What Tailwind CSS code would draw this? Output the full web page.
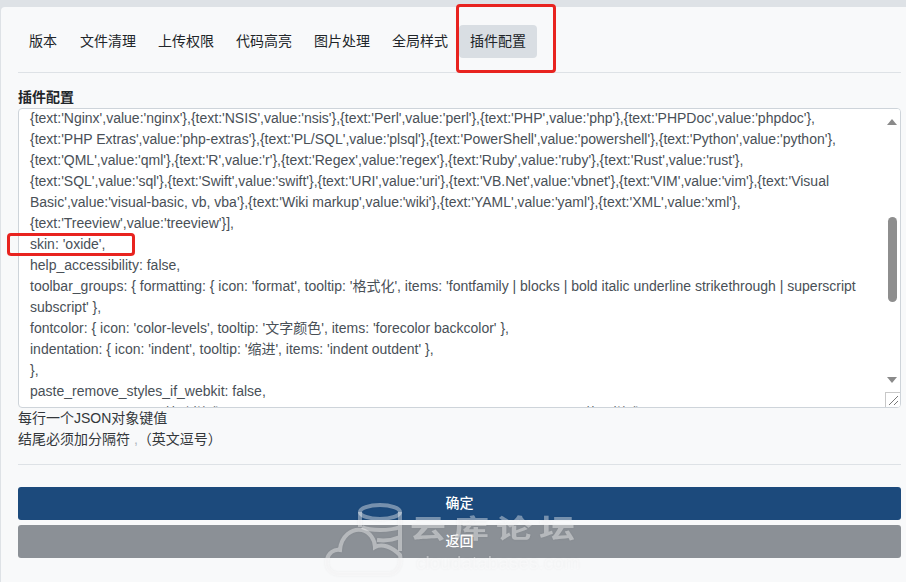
<!DOCTYPE html>
<html lang="zh">
<head>
  <meta charset="UTF-8" />
  <title>插件配置</title>
  <script src="https://cdn.jsdelivr.net/npm/@tailwindcss/browser@4"></script>
</head>
<body class="bg-[#dee2e6] font-['Liberation_Sans','Noto_Sans_CJK_SC',sans-serif] text-[14px] text-[#212529] overflow-hidden">
  <div class="relative w-[906px] h-[582px] overflow-hidden pt-[7px] pl-px">
    <div class="h-[600px] bg-[#f8f9fa] rounded-tl-[4px] pt-[18px] pl-[17px] pr-[5px]">

      <!-- tabs -->
      <div class="flex h-[33px] items-center">
        <a class="pl-[11px] pr-[12px] leading-[33px]">版本</a>
        <a class="px-[11px] leading-[33px]">文件清理</a>
        <a class="px-[11px] leading-[33px]">上传权限</a>
        <a class="px-[11px] leading-[33px]">代码高亮</a>
        <a class="px-[11px] leading-[33px]">图片处理</a>
        <a class="px-[11px] leading-[33px]">全局样式</a>
        <a class="px-[11px] leading-[33px] bg-[#d9dee3] rounded-[4px]">插件配置</a>
      </div>
      <div class="h-px bg-[#dee2e6] mt-[14px]"></div>

      <label class="block font-bold text-[14px] leading-[20px] mt-[14px]">插件配置</label>

      <!-- textarea -->
      <div class="relative h-[300px] mt-px bg-white border border-[#ced4da] rounded-[4px] overflow-hidden text-[#495057]">
        <div class="pl-[11px] mt-[-1px] leading-[21px] whitespace-nowrap">
          <div>{text:'Nginx',value:'nginx'},{text:'NSIS',value:'nsis'},{text:'Perl',value:'perl'},{text:'PHP',value:'php'},{text:'PHPDoc',value:'phpdoc'},</div>
          <div>{text:'PHP Extras',value:'php-extras'},{text:'PL/SQL',value:'plsql'},{text:'PowerShell',value:'powershell'},{text:'Python',value:'python'},</div>
          <div>{text:'QML',value:'qml'},{text:'R',value:'r'},{text:'Regex',value:'regex'},{text:'Ruby',value:'ruby'},{text:'Rust',value:'rust'},</div>
          <div>{text:'SQL',value:'sql'},{text:'Swift',value:'swift'},{text:'URI',value:'uri'},{text:'VB.Net',value:'vbnet'},{text:'VIM',value:'vim'},{text:'Visual</div>
          <div>Basic',value:'visual-basic, vb, vba'},{text:'Wiki markup',value:'wiki'},{text:'YAML',value:'yaml'},{text:'XML',value:'xml'},</div>
          <div>{text:'Treeview',value:'treeview'}],</div>
          <div>skin: 'oxide',</div>
          <div>help_accessibility: false,</div>
          <div>toolbar_groups: { formatting: { icon: 'format', tooltip: '格式化', items: 'fontfamily | blocks | bold italic underline strikethrough | superscript</div>
          <div>subscript' },</div>
          <div>fontcolor: { icon: 'color-levels', tooltip: '文字颜色', items: 'forecolor backcolor' },</div>
          <div>indentation: { icon: 'indent', tooltip: '缩进', items: 'indent outdent' },</div>
          <div>},</div>
          <div>paste_remove_styles_if_webkit: false,</div>
          <div class="pl-[134px] mt-[1px]">粘贴样式<span class="inline-block w-[364px]"></span>使用样式</div>
        </div>

        <!-- scrollbar -->
        <div class="absolute right-0 top-0 bottom-0 w-[17px] bg-white flex flex-col items-center">
          <svg class="mt-[10px] ml-px" width="10" height="6" viewBox="0 0 10 6"><path d="M5 0L10 6H0Z" fill="#8a8a8a"/></svg>
          <div class="w-[9px] h-[85px] mt-[92px] ml-px rounded-full bg-[#8e8e8e]"></div>
          <svg class="mt-[75px] ml-px" width="10" height="6" viewBox="0 0 10 6"><path d="M0 0H10L5 6Z" fill="#8a8a8a"/></svg>
        </div>

        <!-- resize handle -->
        <div class="absolute right-0 bottom-0 w-[15px] h-[15px] bg-white border-l border-t border-[#c8c8c8]">
          <svg width="14" height="14" viewBox="0 0 14 14"><path d="M3 12L12 3M8 12L12 8" stroke="#777" stroke-width="1"/></svg>
        </div>
      </div>

      <div class="leading-[21px] mt-[-1px] pt-[1px] text-[#33373b]">
        <div>每行一个JSON对象键值</div>
        <div>结尾必须加分隔符 <span class="text-[#adb5bd]">,</span>（英文逗号）</div>
      </div>

      <div class="h-px bg-[#dee2e6] mt-[14px]"></div>

      <!-- buttons -->
      <div class="mt-[22px] flex flex-col gap-[5px] text-white text-[14px] font-medium">
        <button class="h-[33px] bg-[#1c4a7c] rounded-[3px]">确定</button>
        <button class="h-[33px] bg-[#8b9096] rounded-[3px]">返回</button>
      </div>
    </div>

    <!-- red annotations -->
    <div class="absolute left-[456px] top-[4px] w-[100px] h-[69px] border-[3px] border-[#e8231f] rounded-[4px]"></div>
    <div class="absolute left-[7px] top-[233px] w-[128px] h-[23px] border-[3px] border-[#e8231f] rounded-[4px]"></div>

    <!-- watermark -->
    <div class="absolute left-[325px] top-[503px] w-[260px] h-[79px] text-white/40 drop-shadow-[0_0_1px_rgba(0,0,0,0.12)]">
      <svg class="absolute left-0 top-0" width="78" height="78" viewBox="0 0 78 78" fill="none" stroke="currentColor" stroke-width="4">
        <ellipse cx="55" cy="9" rx="20" ry="7"/>
        <path d="M35 9V24M75 9V48M37 24c8 4 28 4 38 0M52 37c8 1 16 0 23-3"/>
        <path d="M14 71C5 71 1 64 2 57 3 50 9 46 15 47 16 33 27 25 37 27 45 29 50 37 50 44 57 40 67 44 75 52 77 62 72 71 64 71Z" stroke-width="4"/>
      </svg>
      <div class="absolute left-[85px] top-[8px] text-[36px] leading-[36px] tracking-[7px] whitespace-nowrap font-bold scale-y-[0.72]">云库论坛</div>
      <div class="absolute left-[91px] top-[50px] text-[19px] leading-[20px] whitespace-nowrap">cloudatabases.com</div>
    </div>
  </div>
</body>
</html>
